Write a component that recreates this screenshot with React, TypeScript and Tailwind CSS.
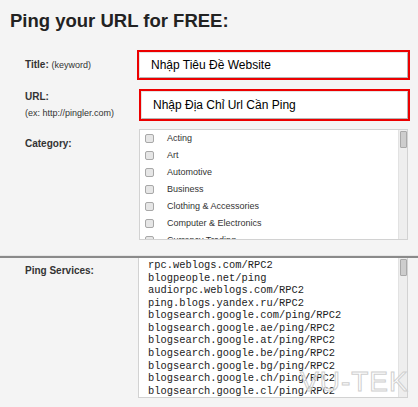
import React from 'react'

const categories = [
  'Acting',
  'Art',
  'Automotive',
  'Business',
  'Clothing & Accessories',
  'Computer & Electronics',
  'Currency Trading',
]

const services = [
  'rpc.weblogs.com/RPC2',
  'blogpeople.net/ping',
  'audiorpc.weblogs.com/RPC2',
  'ping.blogs.yandex.ru/RPC2',
  'blogsearch.google.com/ping/RPC2',
  'blogsearch.google.ae/ping/RPC2',
  'blogsearch.google.at/ping/RPC2',
  'blogsearch.google.be/ping/RPC2',
  'blogsearch.google.bg/ping/RPC2',
  'blogsearch.google.ch/ping/RPC2',
  'blogsearch.google.cl/ping/RPC2',
]

function Scrollbar({ thumbTop }: { thumbTop: string }) {
  return (
    <div className="w-[9px] shrink-0 border-l border-[#e2e2e2] bg-[#eeeeee]">
      <div className={`${thumbTop} mx-auto h-[17px] w-[7px] rounded-[1px] border border-[#a9a9a9] bg-[#cdcdcd]`} />
    </div>
  )
}

function RedInput({ value, width, offset }: { value: string; width: string; offset: string }) {
  return (
    <div className={`${width} ${offset} h-full border-2 border-[#ec0000]`}>
      <div className="flex h-full items-center border border-[#e3e3e3] border-r-[#b5b5b5] border-b-[#b5b5b5] bg-white">
        <span className="pl-[11px] text-[12px] text-black">{value}</span>
      </div>
    </div>
  )
}

export default function App() {
  return (
    <div
      className="relative h-[407px] w-[418px] overflow-hidden bg-[#f4f4f4] text-[#333]"
      style={{ fontFamily: '"Liberation Sans", Arial, sans-serif' }}
    >
      {/* Heading */}
      <div className="h-[50px] pl-[10px] pt-[12px]">
        <h1 className="text-[18.5px] font-bold leading-none text-[#222]">Ping your URL for FREE:</h1>
      </div>

      {/* Title */}
      <div className="flex h-[30px] items-center">
        <div className="w-[137px] shrink-0 pl-[25px] text-[10px]">
          <span className="font-bold">Title:</span> <span className="text-[9px]">(keyword)</span>
        </div>
        <RedInput value="Nhập Tiêu Đề Website" width="w-[273px]" offset="" />
      </div>

      {/* URL */}
      <div className="mt-[9px] flex h-[32px]">
        <div className="w-[137px] shrink-0 pl-[25px] leading-[16px]">
          <div className="text-[10px] font-bold">URL:</div>
          <div className="text-[9px]">(ex: http://pingler.com)</div>
        </div>
        <RedInput value="Nhập Địa Chỉ Url Cần Ping" width="w-[271px]" offset="ml-[2px]" />
      </div>

      {/* Category */}
      <div className="mt-[8px] flex h-[111px]">
        <div className="w-[137px] shrink-0 pl-[25px] pt-[7px] text-[10px] font-bold leading-[16px]">Category:</div>
        <div className="ml-[2px] flex w-[269px] border border-[#d2d2d2] bg-white">
          <div className="flex-1 overflow-hidden">
            {categories.map((c) => (
              <div key={c} className="flex h-[17px] shrink-0 items-center pl-[5px]">
                <span className="h-[9px] w-[9px] shrink-0 rounded-[2px] border border-[#a8a8a8] bg-[#e6e6e6]" />
                <span className="ml-[13px] text-[9px] text-[#333]">{c}</span>
              </div>
            ))}
          </div>
          <Scrollbar thumbTop="mt-[1px]" />
        </div>
      </div>

      {/* Separator */}
      <div className="mt-[15px] h-px bg-[#e6e6e6]" />
      <div className="h-[2px] bg-[#8a8a8a]" />

      {/* Ping services */}
      <div className="flex h-[140px]">
        <div className="w-[138px] shrink-0 pl-[25px] pt-[5px] text-[10px] font-bold leading-[16px]">Ping Services:</div>
        <div className="flex w-[270px] border border-t-0 border-[#d2d2d2] bg-white">
          <div
            className="flex-1 overflow-hidden pl-[9px] pt-[1px] text-[10.4px] leading-[12.57px] text-[#222]"
            style={{ fontFamily: '"Liberation Mono", "Courier New", monospace' }}
          >
            {services.map((s) => (
              <div key={s} className="whitespace-nowrap">{s}</div>
            ))}
          </div>
          <Scrollbar thumbTop="mt-[1px]" />
        </div>
      </div>

      {/* Watermark */}
      <div className="absolute left-[300px] top-[368px] text-[28px] leading-none tracking-[1px] text-white/50 [-webkit-text-stroke:1px_#cfcfcf]">
        VU-TEK
      </div>
    </div>
  )
}
